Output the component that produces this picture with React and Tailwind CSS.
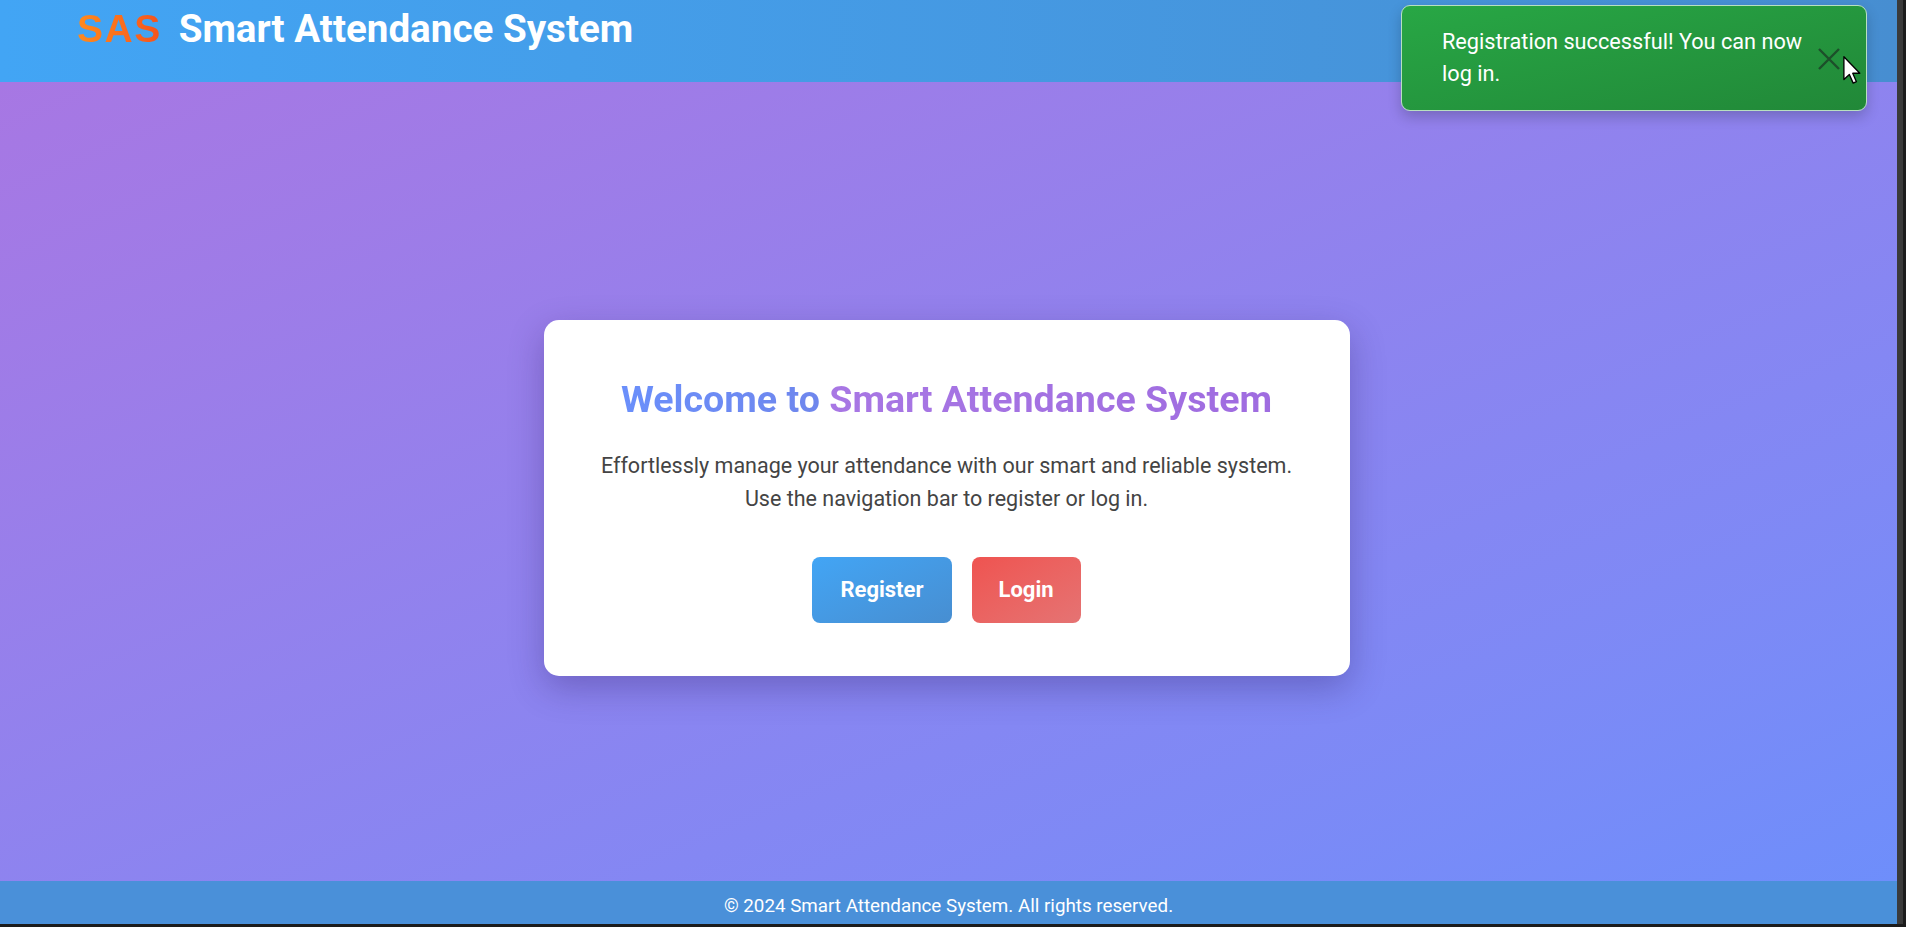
import React from 'react';

const App = () => {
  return (
    <div className="w-[1906px] h-[927px] bg-[#1c1c1c] overflow-hidden font-['Roboto',sans-serif]">
      <div className="flex h-[924px]">
        <div className="relative flex flex-col w-[1897px] h-full">
          {/* Header */}
          <header className="h-[82px] shrink-0 bg-gradient-to-r from-[#42a5f5] to-[#478ed1] pl-[77px] pt-[9px]">
            <div className="flex items-baseline gap-[17px] leading-none">
              <span className="font-['Liberation_Sans',sans-serif] font-bold text-[39px] tracking-[1.5px] bg-gradient-to-r from-[#ff8a1c] to-[#f4511e] bg-clip-text text-transparent">
                SAS
              </span>
              <span className="text-[38.6px] font-bold text-white">Smart Attendance System</span>
            </div>
          </header>

          {/* Main */}
          <main className="flex-1 flex items-center justify-center pt-[33px] pr-[4px] bg-gradient-to-br from-[#a777e3] to-[#6e8efb]">
            <div className="w-[806px] h-[356px] rounded-[15px] bg-white shadow-[0_12px_35px_rgba(40,20,90,0.3)] flex flex-col items-center pt-[57.5px]">
              <h1 className="text-[37.6px] leading-[42px] font-bold">
                <span className="bg-gradient-to-r from-[#6a8ffb] to-[#6f86ec] bg-clip-text text-transparent">Welcome to </span>
                <span className="bg-gradient-to-r from-[#a877e4] to-[#9f6ce0] bg-clip-text text-transparent">Smart Attendance System</span>
              </h1>
              <p className="mt-[29.5px] text-[21.5px] leading-[33px] text-[#444] text-center">
                Effortlessly manage your attendance with our smart and reliable system.
                <br />
                Use the navigation bar to register or log in.
              </p>
              <div className="mt-[41.5px] flex gap-[20px]">
                <button className="h-[66px] px-[28px] rounded-[8px] bg-gradient-to-br from-[#42a5f5] to-[#478ed1] text-white text-[22px] font-bold">
                  Register
                </button>
                <button className="h-[66px] px-[27px] rounded-[8px] bg-gradient-to-br from-[#ef5350] to-[#e57373] text-white text-[22px] font-bold">
                  Login
                </button>
              </div>
            </div>
          </main>

          {/* Footer */}
          <footer className="h-[43px] shrink-0 bg-[#4a90d9] text-center pt-[13px]">
            <p className="text-[18.8px] leading-6 text-white">© 2024 Smart Attendance System. All rights reserved.</p>
          </footer>

          {/* Toast */}
          <div className="absolute top-[5px] left-[1401px] w-[466px] h-[106px] rounded-[9px] border border-[#b8e0c0] bg-gradient-to-br from-[#28a745] to-[#218838] shadow-[0_6px_14px_rgba(0,0,0,0.2)] flex items-start pl-[40px] pt-[20px]">
            <p className="w-[372px] text-[21.7px] leading-[32px] text-white">
              Registration successful! You can now log in.
            </p>
            <svg className="absolute left-[416px] top-[42px]" width="22" height="22" viewBox="0 0 22 22">
              <path d="M1 1 L21 21 M21 1 L1 21" stroke="#1d4f2a" strokeWidth="2.4" />
            </svg>
            <svg className="absolute left-[441px] top-[50px]" width="18" height="28" viewBox="0 0 12 19">
              <path d="M0.5 0.5 L0.5 16 L4.2 12.6 L6.8 18.4 L9 17.4 L6.5 11.7 L11.3 11.7 Z" fill="#fff" stroke="#000" strokeWidth="0.9" strokeLinejoin="round" />
            </svg>
          </div>
        </div>
        <div className="w-[6px] h-full bg-[#3a3a3a]" />
      </div>
    </div>
  );
};

export default App;
